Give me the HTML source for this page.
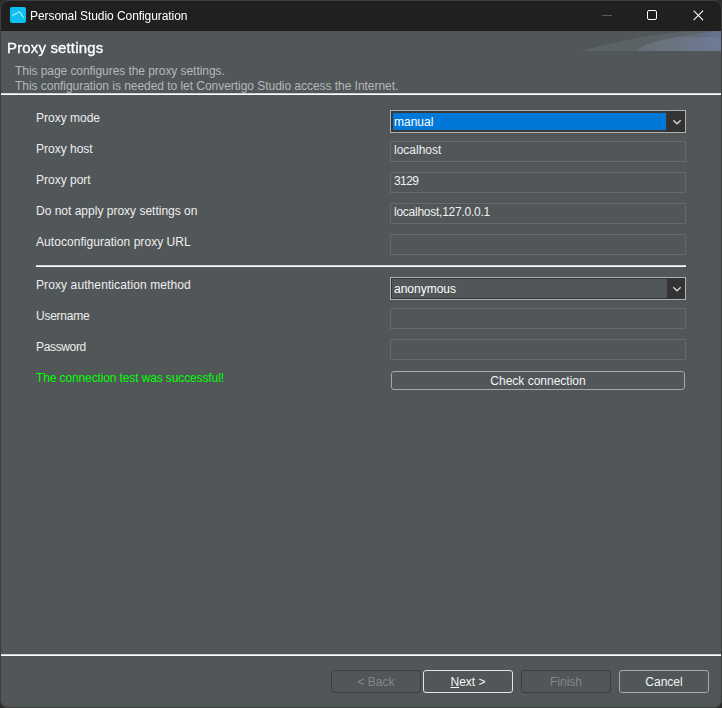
<!DOCTYPE html>
<html><head><meta charset="utf-8">
<style>
*{margin:0;padding:0;box-sizing:border-box}
html,body{width:722px;height:708px;overflow:hidden;background:#2b2b2b}
body{font-family:"Liberation Sans",sans-serif;font-size:12px;color:#f0f0f0;position:relative}
.win{position:absolute;left:0;top:0;width:722px;height:708px;border-radius:8px;overflow:hidden;background:#515658}
.frame{position:absolute;left:0;top:0;width:722px;height:708px;border:1px solid #3e3e3e;border-radius:8px;z-index:10}
.tb{position:absolute;left:0;top:0;width:722px;height:31px;background:#202020}
.abs{position:absolute;white-space:nowrap}
.lbl{position:absolute;left:36px;white-space:nowrap;color:#eeeeee}
.inp{position:absolute;left:390px;width:296px;height:21px;border:1px solid #6a6866;background:#515658}
.inp span{position:absolute;left:3px;top:1px}
.btn{position:absolute;height:23px;width:90px;border:1px solid #a6a8a9;border-radius:3px;text-align:center;line-height:22px;color:#f4f4f4}
.btn.dis{border-color:#3c3d3e;color:#84878a}
</style></head><body>
<div class="win">
  <div class="tb">
    <div class="abs" style="left:10px;top:7px;width:16px;height:16px;background:#0cc0f0;border-radius:2px">
      <svg width="16" height="16" viewBox="0 0 16 16" style="position:absolute;left:0;top:0"><path d="M2.2 8.6 L4.2 7.3 L6.4 6.8 L8.6 4.5 L11 6.3 L11.7 8.2 L13.6 10.6" fill="none" stroke="#fff" stroke-width="0.9"/></svg>
    </div>
    <div class="abs" style="left:30px;top:9px;color:#ffffff;letter-spacing:-0.07px;will-change:transform">Personal Studio Configuration</div>
    <div class="abs" style="left:602px;top:15px;width:10px;height:1px;background:#5a5a5a"></div>
    <div class="abs" style="left:647px;top:10px;width:10px;height:10px;border:1px solid #fff;border-radius:2px"></div>
    <svg class="abs" style="left:693px;top:10px" width="11" height="11" viewBox="0 0 11 11"><path d="M0.6 0.6 L10.1 10.1 M10.1 0.6 L0.6 10.1" stroke="#fff" stroke-width="1.05"/></svg>
  </div>
  <!-- header swoosh -->
  <svg class="abs" style="left:560px;top:31px" width="162" height="20" viewBox="0 0 162 20">
    <defs>
      <linearGradient id="g2" x1="0" x2="1" y1="0" y2="0">
        <stop offset="0" stop-color="#687076"/>
        <stop offset="0.5" stop-color="#6a7482"/>
        <stop offset="1" stop-color="#6e7b98"/>
      </linearGradient>
    </defs>
    <path d="M20.5 20 Q50 12 81 6 Q110 1.5 131 0 L162 0 L162 20 Z" fill="#5c6367"/>
    <path d="M76.5 20 Q85 12 103 8.8 Q130 3 157 0 L162 0 L162 20 Z" fill="url(#g2)"/>
    <clipPath id="c2"><rect x="0" y="0" width="162" height="6"/></clipPath>
    <path d="M76.5 20 Q85 12 103 8.8 Q130 3 157 0 L162 0 L162 20 Z" fill="#000" fill-opacity="0.07" clip-path="url(#c2)"/>
  </svg>
  <div class="abs" style="left:7px;top:39px;font-size:15px;color:#fff;-webkit-text-stroke:0.3px #fff;letter-spacing:0.15px;will-change:transform">Proxy settings</div>
  <div class="abs" style="left:15px;top:64px;color:#b5b8ba;letter-spacing:-0.06px">This page configures the proxy settings.</div>
  <div class="abs" style="left:15px;top:79px;color:#b5b8ba;letter-spacing:-0.04px">This configuration is needed to let Convertigo Studio access the Internet.</div>
  <div class="abs" style="left:0;top:93px;width:722px;height:1px;background:#d0d0d0"></div>
  <div class="abs" style="left:0;top:94px;width:722px;height:1px;background:#ffffff"></div>

  <div class="lbl" style="top:111px">Proxy mode</div>
  <div class="abs" style="left:390px;top:110px;width:296px;height:23px;border:1px solid #b0b1b2;background:#333333">
    <div class="abs" style="left:0;top:0;width:276px;height:21px;border:2px solid #3b3936;border-right-width:1px"></div>
    <div class="abs" style="left:2px;top:2px;width:273px;height:17px;background:#0078d7"></div>
    <div class="abs" style="left:3px;top:4px;color:#fff">manual</div>
    <svg class="abs" style="left:281px;top:8px" width="11" height="6" viewBox="0 0 11 6"><path d="M1.3 1.2 L5 4.8 L8.7 1.2" fill="none" stroke="#d8d8d8" stroke-width="1.3"/></svg>
  </div>
  <div class="lbl" style="top:142px">Proxy host</div>
  <div class="inp" style="top:141px"><span>localhost</span></div>
  <div class="lbl" style="top:173px">Proxy port</div>
  <div class="inp" style="top:172px"><span style="letter-spacing:-0.6px">3129</span></div>
  <div class="lbl" style="top:204px">Do not apply proxy settings on</div>
  <div class="inp" style="top:203px"><span style="letter-spacing:-0.25px">localhost,127.0.0.1</span></div>
  <div class="lbl" style="top:235px;letter-spacing:0.05px">Autoconfiguration proxy URL</div>
  <div class="inp" style="top:234px"></div>

  <div class="abs" style="left:36px;top:265px;width:650px;height:1px;background:#d0d0d0"></div>
  <div class="abs" style="left:36px;top:266px;width:650px;height:1px;background:#ffffff"></div>

  <div class="lbl" style="top:278px;letter-spacing:0.1px">Proxy authentication method</div>
  <div class="abs" style="left:390px;top:277px;width:296px;height:23px;border:1px solid #b0b1b2;background:#333333">
    <div class="abs" style="left:1px;top:1px;width:275px;height:19px;background:#515658"></div>
    <div class="abs" style="left:3px;top:4px;color:#fff">anonymous</div>
    <svg class="abs" style="left:281px;top:8px" width="11" height="6" viewBox="0 0 11 6"><path d="M1.3 1.2 L5 4.8 L8.7 1.2" fill="none" stroke="#d8d8d8" stroke-width="1.3"/></svg>
  </div>
  <div class="lbl" style="top:309px;letter-spacing:-0.25px">Username</div>
  <div class="inp" style="top:308px"></div>
  <div class="lbl" style="top:340px;letter-spacing:-0.35px">Password</div>
  <div class="inp" style="top:339px"></div>
  <div class="lbl" style="top:370.6px;color:#00ff00;letter-spacing:-0.12px">The connection test was successful!</div>
  <div class="btn" style="left:391px;top:371px;width:294px;height:19px;line-height:18px">Check connection</div>

  <div class="abs" style="left:0;top:654px;width:722px;height:1px;background:#d0d0d0"></div>
  <div class="abs" style="left:0;top:655px;width:722px;height:1px;background:#ffffff"></div>
  <div class="btn dis" style="left:331px;top:670px">&lt; Back</div>
  <div class="btn" style="left:423px;top:670px;border-color:#e4e4e4"><u>N</u>ext &gt;</div>
  <div class="btn dis" style="left:521px;top:670px">Finish</div>
  <div class="btn" style="left:619px;top:670px">Cancel</div>
</div>
<div class="frame"></div>
</body></html>
